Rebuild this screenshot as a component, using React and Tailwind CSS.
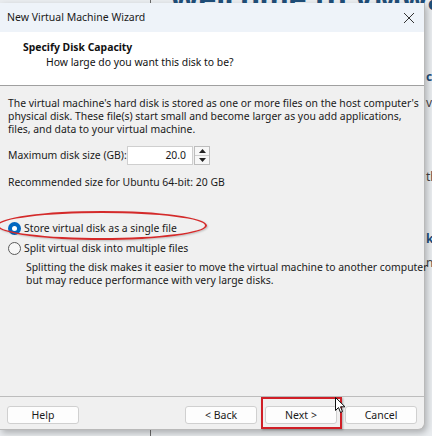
import React from 'react'

const font = { fontFamily: '"Noto Sans", "Open Sans", sans-serif' }

const Button = ({ children, className = '' }) => (
  <button
    className={`h-[18px] w-[72px] rounded-[3px] border border-[#d0d0d0] bg-[#fdfdfd] text-[10.5px] leading-none text-[#1a1a1a] ${className}`}
  >
    {children}
  </button>
)

const Radio = ({ checked, label }) => (
  <label className="flex items-center gap-[3px] h-[20px]">
    {checked ? (
      <span className="w-[13px] h-[13px] rounded-full bg-[#0067c0] flex items-center justify-center">
        <span className="w-[5px] h-[5px] rounded-full bg-white" />
      </span>
    ) : (
      <span className="w-[13px] h-[13px] rounded-full border border-[#5a5a5a] bg-[#f7f7f7]" />
    )}
    <span>{label}</span>
  </label>
)

export default function App() {
  return (
    <div className="relative w-[432px] h-[436px] overflow-hidden bg-[#e9ecef]" style={font}>
      {/* app behind the dialog */}
      <div className="absolute left-[150px] top-0 w-px h-full bg-[#6b6b6b]" />
      <div className="absolute left-[170px] top-[-24px] text-[30px] font-bold text-[#1f4e79] whitespace-nowrap">
        Welcome to VMware W
      </div>
      <div className="absolute left-[426px] top-[70px] text-[12px] leading-[14px] text-[#444] whitespace-nowrap">
        <div className="font-bold text-[#1f4e79]">c</div>
        <div className="mt-[12px]">vil</div>
        <div className="mt-[60px]">th</div>
        <div className="mt-[48px] font-bold text-[#1f4e79]">k</div>
        <div className="mt-[10px]">nc</div>
      </div>

      {/* dialog */}
      <div className="relative mt-[3px] w-[425px] h-[427px] flex flex-col bg-[#f0f0f0] rounded-br-[7px] border-r border-b border-[#b9b9b9] shadow-[2px_3px_6px_rgba(0,0,0,0.25)]">
        <div className="h-[29px] shrink-0 bg-[#eef3f9] flex items-center justify-between pl-[7px] pr-[9px] text-[10.5px] text-[#1a1a1a]">
          <span>New Virtual Machine Wizard</span>
          <svg width="12" height="12" viewBox="0 0 12 12" stroke="#333" strokeWidth="1">
            <path d="M1 1 L11 11 M11 1 L1 11" />
          </svg>
        </div>

        <div className="h-[54px] shrink-0 bg-white border-b border-[#a0a0a0] pt-[8px] text-[10.4px] leading-[15px] text-[#111]">
          <div className="pl-[23px] font-bold">Specify Disk Capacity</div>
          <div className="pl-[46px]">How large do you want this disk to be?</div>
        </div>

        <div className="flex-1 px-[8px] pt-[11px] text-[10.4px] leading-[13px] text-[#1a1a1a]">
          <div className="whitespace-nowrap">
            <div>The virtual machine's hard disk is stored as one or more files on the host computer's</div>
            <div>physical disk. These file(s) start small and become larger as you add applications,</div>
            <div>files, and data to your virtual machine.</div>
          </div>

          <div className="mt-[10px] flex items-center whitespace-nowrap">
            <span className="w-[119px]">Maximum disk size (GB):</span>
            <div className="w-[66px] h-[19px] bg-white border border-[#cfcfcf] flex items-center justify-end pr-[6px]">
              20.0
            </div>
            <div className="ml-px w-[16px] h-[19px] border border-[#bdbdbd] bg-[#f7f7f7] flex flex-col">
              <div className="flex-1 flex items-center justify-center border-b border-[#cfcfcf]">
                <svg width="7" height="4" viewBox="0 0 7 4"><path d="M0 4 L3.5 0 L7 4 Z" fill="#222" /></svg>
              </div>
              <div className="flex-1 flex items-center justify-center">
                <svg width="7" height="4" viewBox="0 0 7 4"><path d="M0 0 L3.5 4 L7 0 Z" fill="#222" /></svg>
              </div>
            </div>
          </div>

          <div className="mt-[11px]">Recommended size for Ubuntu 64-bit: 20 GB</div>

          <div className="mt-[29px]">
            <Radio checked label="Store virtual disk as a single file" />
            <Radio label="Split virtual disk into multiple files" />
            <div className="pl-[18px] mt-[3px] whitespace-nowrap">
              <div>Splitting the disk makes it easier to move the virtual machine to another computer</div>
              <div>but may reduce performance with very large disks.</div>
            </div>
          </div>
        </div>

        <div className="h-[33px] shrink-0 border-t border-[#bdbdbd] flex items-start pt-[9px] px-[7px]">
          <Button>Help</Button>
          <div className="ml-auto flex gap-[8px]">
            <Button>&lt; Back</Button>
            <Button className="border-[#2a73c0]">Next &gt;</Button>
            <Button>Cancel</Button>
          </div>
        </div>
      </div>

      {/* red annotations */}
      <div className="absolute left-[-3px] top-[211px] w-[210px] h-[29px] rounded-[50%] border-2 border-[#d42a2a] shadow-[1px_1px_2px_rgba(0,0,0,0.2)]" />
      <div className="absolute left-[261px] top-[397px] w-[81px] h-[32px] border-[2px] border-[#d01f27] shadow-[1px_1px_2px_rgba(0,0,0,0.3)]" />

      {/* mouse cursor */}
      <svg className="absolute left-[335px] top-[397px]" width="11" height="17" viewBox="0 0 11 17">
        <path d="M0.5 0.5 L0.5 13.5 L3.5 10.5 L5.5 15.5 L7.5 14.5 L5.5 9.8 L10 9.8 Z" fill="#fff" stroke="#111" strokeWidth="1" />
      </svg>
    </div>
  )
}
